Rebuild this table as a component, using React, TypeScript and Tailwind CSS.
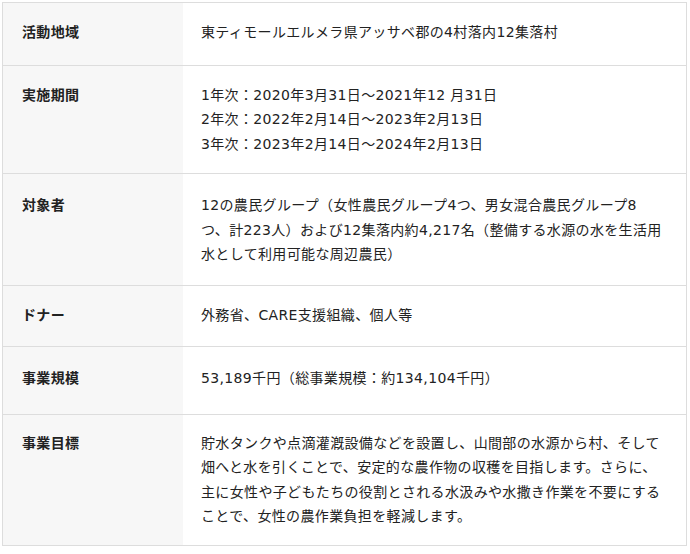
const rows: { label: string; lines: string[]; pad: string }[] = [
  {
    label: '活動地域',
    lines: ['東ティモールエルメラ県アッサベ郡の4村落内12集落村'],
    pad: 'pt-[17px] pb-[20px]',
  },
  {
    label: '実施期間',
    lines: [
      '1年次：2020年3月31日～2021年12 月31日',
      '2年次：2022年2月14日～2023年2月13日',
      '3年次：2023年2月14日～2024年2月13日',
    ],
    pad: 'pt-[17px] pb-[17px]',
  },
  {
    label: '対象者',
    lines: [
      '12の農民グループ（女性農民グループ4つ、男女混合農民グループ8',
      'つ、計223人）および12集落内約4,217名（整備する水源の水を生活用',
      '水として利用可能な周辺農民）',
    ],
    pad: 'pt-[19px] pb-[18px]',
  },
  {
    label: 'ドナー',
    lines: ['外務省、CARE支援組織、個人等'],
    pad: 'pt-[17px] pb-[19px]',
  },
  {
    label: '事業規模',
    lines: ['53,189千円（総事業規模：約134,104千円）'],
    pad: 'pt-[19px] pb-[23px]',
  },
  {
    label: '事業目標',
    lines: [
      '貯水タンクや点滴灌漑設備などを設置し、山間部の水源から村、そして',
      '畑へと水を引くことで、安定的な農作物の収穫を目指します。さらに、',
      '主に女性や子どもたちの役割とされる水汲みや水撒き作業を不要にする',
      'ことで、女性の農作業負担を軽減します。',
    ],
    pad: 'pt-[16px] pb-[16px]',
  },
];

export default function App() {
  return (
    <div
      className="pl-[2px] pt-[2px] bg-white text-[#222] text-[14px] leading-[1.75] tracking-[0.35px]"
      style={{ fontFamily: '"DejaVu Sans", "Noto Sans CJK JP", sans-serif' }}
    >
      <div className="w-[685px] border border-[#dddddd]">
        {rows.map((row, i) => (
          <div
            key={row.label}
            className={`grid grid-cols-[180px_1fr] ${i < rows.length - 1 ? 'border-b border-[#dddddd]' : ''}`}
          >
            <div className={`bg-[#f7f7f7] pl-[19px] font-bold ${row.pad}`}>{row.label}</div>
            <div className={`pl-[18px] pr-[18px] ${row.pad}`}>
              {row.lines.map((line) => (
                <p key={line} className="whitespace-nowrap">
                  {line}
                </p>
              ))}
            </div>
          </div>
        ))}
      </div>
    </div>
  );
}
